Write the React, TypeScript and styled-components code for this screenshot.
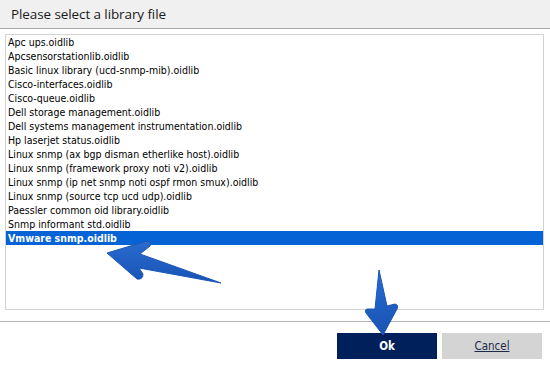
import React, {useState} from 'react';
import styled, {createGlobalStyle} from 'styled-components';

const GlobalStyle = createGlobalStyle`
html, body {
    margin: 0;
    padding: 0;
    background: #ffffff;
}
`;

const Dialog = styled.div`
width: 550px;
height: 368px;
display: flex;
flex-direction: column;
background: #ffffff;
font-family: "DejaVu Sans Condensed", "DejaVu Sans", sans-serif;
overflow: hidden;
`;

const Header = styled.div`
height: 28px;
display: flex;
align-items: center;
padding: 0 11px;
background: #f0f0f0;
border-bottom: 1px solid #a8a8a8;
font-family: "Open Sans", "Noto Sans", sans-serif;
font-size: 13.5px;
letter-spacing: -0.1px;
color: #1a1a1a;
`;

const Body = styled.div`
padding: 5px 6px 11px 5px;
`;

const ListBox = styled.ul`
list-style: none;
margin: 0;
padding: 0;
height: 274px;
border: 1px solid #d2d2d2;
overflow: hidden;
`;

const Item = styled.li<{$selected?: boolean}>`
height: 14px;
line-height: 14px;
padding-left: 2px;
font-size: 10.5px;
white-space: nowrap;
cursor: default;
color: ${p => (p.$selected ? '#ffffff' : '#000000')};
background: ${p => (p.$selected ? '#0563d6' : 'transparent')};
font-weight: ${p => (p.$selected ? 'bold' : 'normal')};
`;

const Footer = styled.div`
display: flex;
justify-content: flex-end;
gap: 5px;
padding: 11px 8px 0 0;
border-top: 1px solid #b4b4b4;
`;

const Button = styled.button<{$primary?: boolean}>`
width: 100px;
height: 26px;
border: none;
font-family: "DejaVu Sans Condensed", "DejaVu Sans", sans-serif;
font-size: 11.5px;
cursor: pointer;
background: ${p => (p.$primary ? '#00205b' : '#d4d4d4')};
color: ${p => (p.$primary ? '#ffffff' : '#1c2a4a')};
font-weight: ${p => (p.$primary ? 'bold' : 'normal')};
text-decoration: ${p => (p.$primary ? 'none' : 'underline')};
`;

const Overlay = styled.svg`
position: absolute;
left: 0;
top: 0;
width: 550px;
height: 368px;
pointer-events: none;
`;

const Stage = styled.div`
position: relative;
width: 550px;
height: 368px;
`;

const files = [
    'Apc ups.oidlib',
    'Apcsensorstationlib.oidlib',
    'Basic linux library (ucd-snmp-mib).oidlib',
    'Cisco-interfaces.oidlib',
    'Cisco-queue.oidlib',
    'Dell storage management.oidlib',
    'Dell systems management instrumentation.oidlib',
    'Hp laserjet status.oidlib',
    'Linux snmp (ax bgp disman etherlike host).oidlib',
    'Linux snmp (framework proxy noti v2).oidlib',
    'Linux snmp (ip net snmp noti ospf rmon smux).oidlib',
    'Linux snmp (source tcp ucd udp).oidlib',
    'Paessler common oid library.oidlib',
    'Snmp informant std.oidlib',
    'Vmware snmp.oidlib',
];

export default function App() {
    const [selected, setSelected] = useState(files.length - 1);

    return (
        <Stage>
            <GlobalStyle/>
            <Dialog>
                <Header>{'Please select a library file'}</Header>
                <Body>
                    <ListBox>
                        {files.map((f, i) => (
                            <Item
                                key={f}
                                $selected={i === selected}
                                onClick={() => setSelected(i)}
                            >
                                {f}
                            </Item>
                        ))}
                    </ListBox>
                </Body>
                <Footer>
                    <Button $primary={true}>{'Ok'}</Button>
                    <Button>{'Cancel'}</Button>
                </Footer>
            </Dialog>

            {/* annotation arrows */}
            <Overlay viewBox='0 0 550 368'>
                <defs>
                    <linearGradient id='arrowFill' x1='0' y1='0' x2='0' y2='1'>
                        <stop offset='0' stopColor='#2a6bd0'/>
                        <stop offset='1' stopColor='#1753b4'/>
                    </linearGradient>
                </defs>
                <path
                    d='M107 253 L147 241 Q152 241 150 246 L140 254 L221 283 L139 268 L143 274 Q143 280 137 279 Z'
                    fill='url(#arrowFill)'
                    stroke='#1a56b8'
                    strokeWidth='1'
                    strokeLinejoin='round'
                />
                <path
                    d='M379 270 L387 306 L395 304 Q399 305 397 309 L383 335 L366 313 Q364 309 368 309 L375 309 Z'
                    fill='url(#arrowFill)'
                    stroke='#1a56b8'
                    strokeWidth='1'
                    strokeLinejoin='round'
                />
            </Overlay>
        </Stage>
    );
}
